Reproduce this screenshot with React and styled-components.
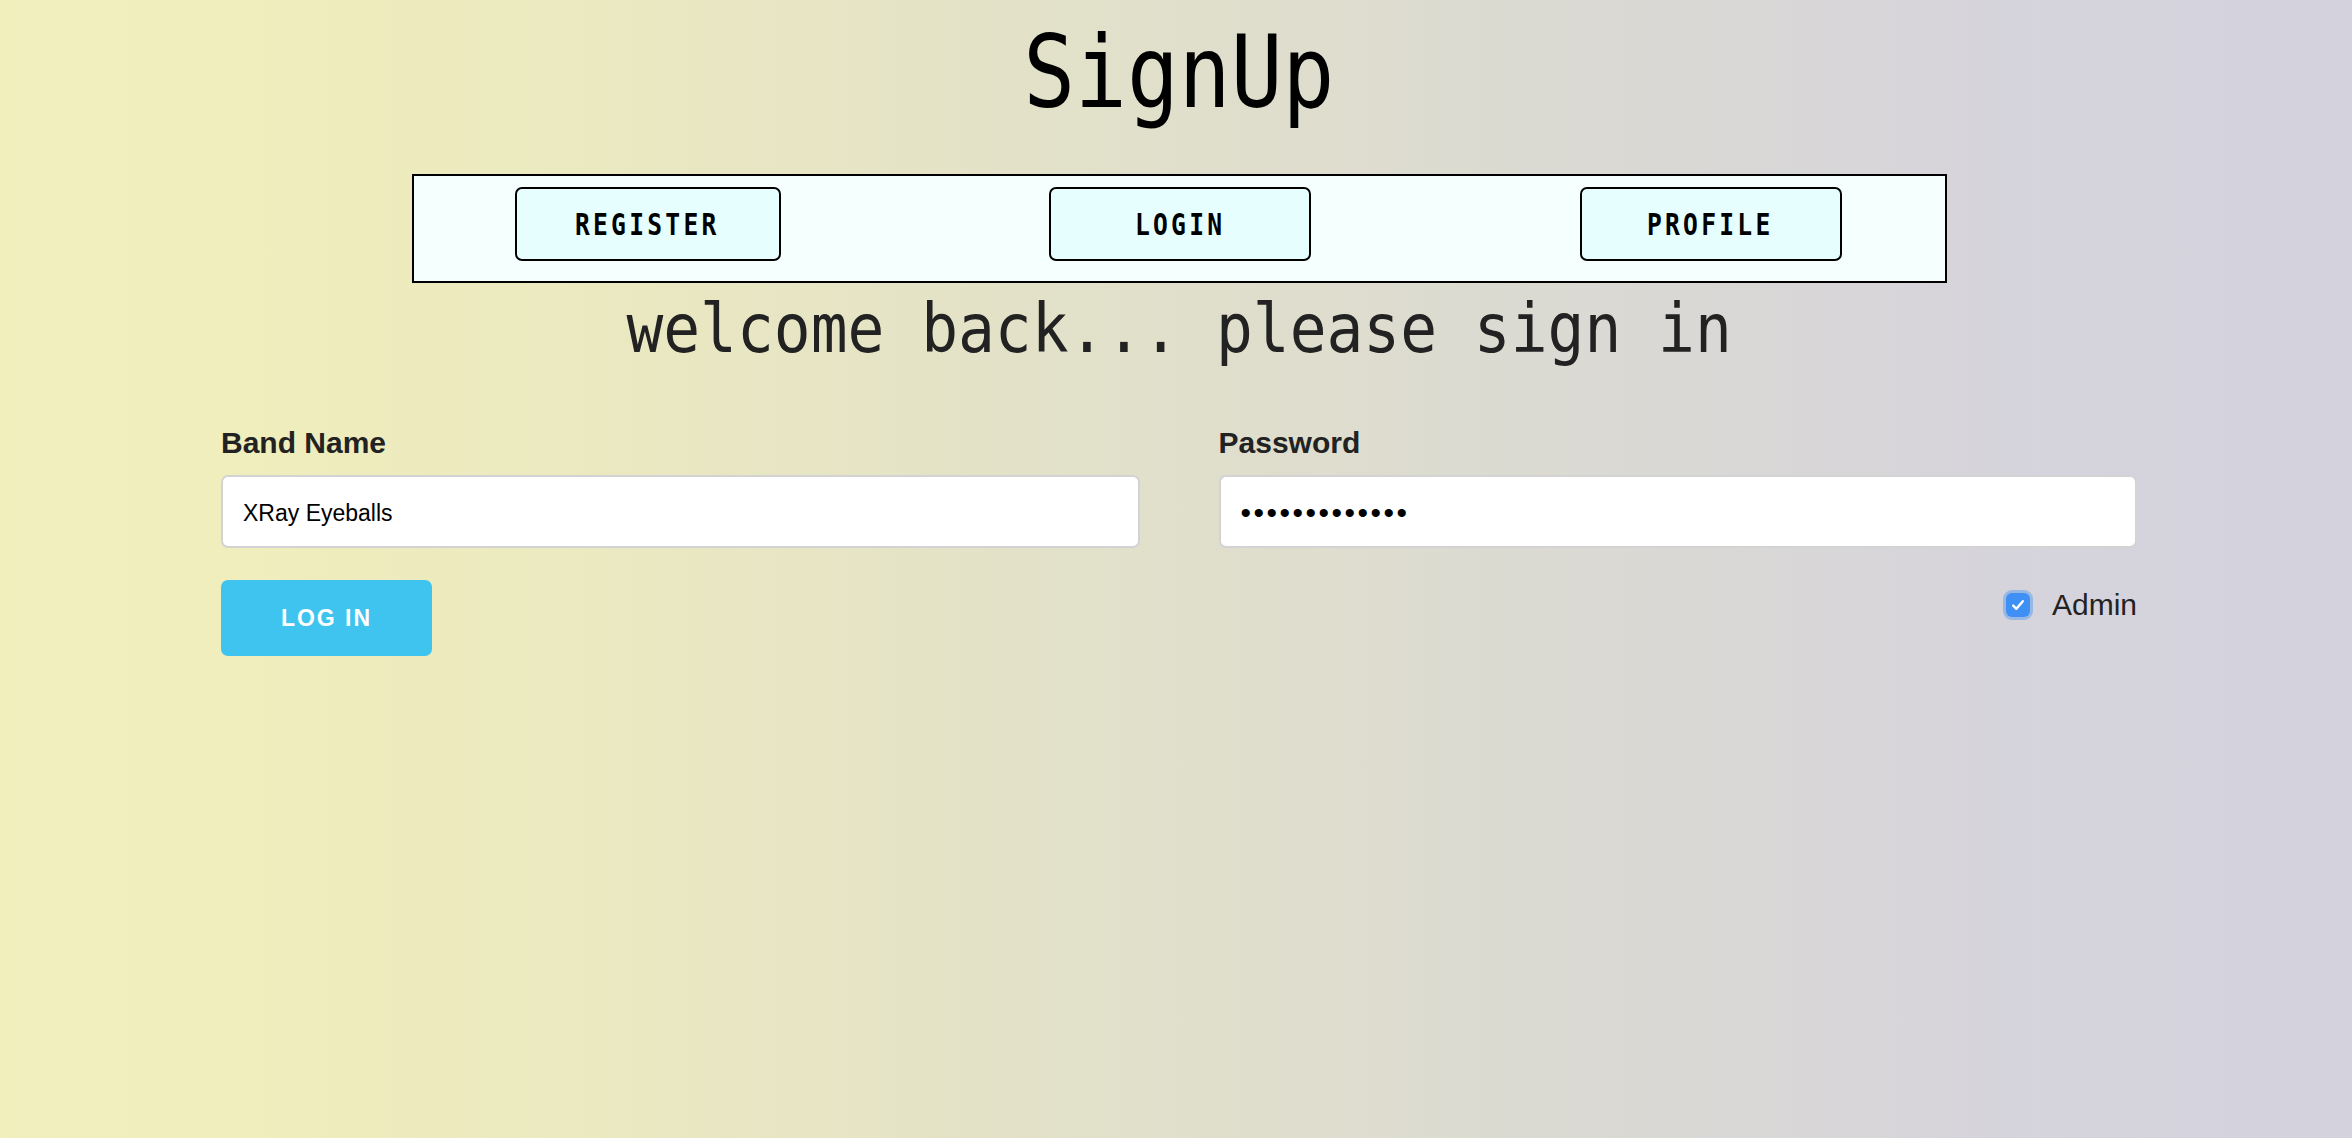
import React from "react";
import styled, { createGlobalStyle } from "styled-components";

const GlobalStyle = createGlobalStyle`
  html, body {
    margin: 0;
    padding: 0;
    min-height: 100%;
  }
  body {
    min-height: 100vh;
    font-family: "Liberation Sans", Arial, sans-serif;
    background: linear-gradient(
      to right,
      #f1efbc 0%,
      #f0eebc 10%,
      #ebe9c0 25%,
      #e2e1c9 45%,
      #dbdad2 65%,
      #d5d3dc 88%,
      #d4d2dd 100%
    );
  }
`;

const Page = styled.div`
  min-height: 100vh;
  box-sizing: border-box;
  padding-left: 6px;
  display: flex;
  flex-direction: column;
  align-items: center;
`;

const Title = styled.h1`
  margin: 0;
  padding-top: 15px;
  font-family: "DejaVu Sans Mono", monospace;
  font-weight: normal;
  font-size: 99px;
  line-height: 115px;
  color: #000;
  text-align: center;
`;

const Condensed = styled.span`
  display: inline-block;
  transform: scaleX(${(p) => p.$sx});
  transform-origin: center;
`;

const Nav = styled.nav`
  margin-top: 44px;
  width: 1535px;
  height: 109px;
  box-sizing: border-box;
  border: 2px solid #000;
  background: #f4fffe;
  display: flex;
  justify-content: space-between;
  align-items: flex-start;
  padding: 11px 103px 0 101px;
`;

const NavButton = styled.button`
  width: ${(p) => p.$w}px;
  height: 74px;
  box-sizing: border-box;
  border: 2px solid #000;
  border-radius: 7px;
  background: #e6fefe;
  font-family: "DejaVu Sans Mono", monospace;
  font-weight: bold;
  font-size: 30px;
  color: #000;
  cursor: pointer;
  display: flex;
  align-items: center;
  justify-content: center;
  padding: 0;
`;

const NavText = styled.span`
  display: inline-block;
  transform: scaleX(0.82);
  letter-spacing: 4px;
`;

const Welcome = styled.h2`
  margin: 6px 0 0;
  font-family: "DejaVu Sans Mono", monospace;
  font-weight: normal;
  font-size: 68px;
  line-height: 79px;
  color: #222;
  text-align: center;
  white-space: nowrap;
`;

const Form = styled.form`
  margin-top: 58px;
  width: 1916px;
  display: grid;
  grid-template-columns: 1fr 1fr;
  column-gap: 79px;
`;

const Field = styled.div`
  display: flex;
  flex-direction: column;
`;

const Label = styled.label`
  font-family: "Liberation Sans", Arial, sans-serif;
  font-weight: bold;
  font-size: 30px;
  line-height: 34px;
  color: #222;
`;

const Input = styled.input`
  margin-top: 15px;
  height: 73px;
  box-sizing: border-box;
  border: 2px solid #d3d3d3;
  border-radius: 7px;
  background: #fff;
  padding: 3px 20px 0;
  font-family: "Liberation Sans", Arial, sans-serif;
  font-size: 23px;
  color: #000;
  outline: none;
  &[type="password"] {
    font-size: 30px;
    letter-spacing: 2.5px;
    padding-top: 2px;
  }
`;

const Actions = styled.div`
  margin-top: 32px;
  display: flex;
  justify-content: ${(p) => (p.$end ? "flex-end" : "flex-start")};
  align-items: flex-start;
`;

const SubmitButton = styled.button`
  width: 211px;
  height: 76px;
  border: none;
  border-radius: 7px;
  background: #3ec4ee;
  color: #fff;
  font-family: "Liberation Sans", Arial, sans-serif;
  font-weight: bold;
  font-size: 23px;
  letter-spacing: 2px;
  cursor: pointer;
  padding: 0;
`;

const CheckLabel = styled.label`
  margin-top: 8px;
  display: flex;
  align-items: center;
  gap: 22px;
  font-family: "Liberation Sans", Arial, sans-serif;
  font-size: 30px;
  line-height: 34px;
  color: #222;
  cursor: pointer;
`;

const HiddenCheck = styled.input`
  position: absolute;
  opacity: 0;
  width: 0;
  height: 0;
  margin: 0;
`;

const CheckBox = styled.span`
  width: 24px;
  height: 24px;
  border-radius: 6px;
  background: #3f90f4;
  box-shadow: 0 0 0 3px rgba(76, 150, 240, 0.45);
  display: flex;
  align-items: center;
  justify-content: center;
  margin-left: 3px;
`;

export default function App() {
  return (
    <>
      <GlobalStyle />
      <Page>
        <Title>
          <Condensed $sx={0.87}>SignUp</Condensed>
        </Title>
        <Nav>
          <NavButton $w={266}>
            <NavText>REGISTER</NavText>
          </NavButton>
          <NavButton $w={262}>
            <NavText>LOGIN</NavText>
          </NavButton>
          <NavButton $w={262}>
            <NavText>PROFILE</NavText>
          </NavButton>
        </Nav>
        <Welcome>
          <Condensed $sx={0.9}>welcome back... please sign in</Condensed>
        </Welcome>
        <Form onSubmit={(e) => e.preventDefault()}>
          <Field>
            <Label htmlFor="band">Band Name</Label>
            <Input id="band" type="text" defaultValue="XRay Eyeballs" />
            <Actions>
              <SubmitButton type="submit">LOG IN</SubmitButton>
            </Actions>
          </Field>
          <Field>
            <Label htmlFor="pw">Password</Label>
            <Input id="pw" type="password" defaultValue="xrayeyeballs1" />
            <Actions $end>
              <CheckLabel>
                <HiddenCheck type="checkbox" defaultChecked />
                <CheckBox>
                  <svg width="16" height="16" viewBox="0 0 16 16">
                    <path
                      d="M3.2 8.6 L6.4 11.8 L12.8 4.2"
                      fill="none"
                      stroke="#fff"
                      strokeWidth="2.4"
                      strokeLinecap="round"
                      strokeLinejoin="round"
                    />
                  </svg>
                </CheckBox>
                Admin
              </CheckLabel>
            </Actions>
          </Field>
        </Form>
      </Page>
    </>
  );
}
